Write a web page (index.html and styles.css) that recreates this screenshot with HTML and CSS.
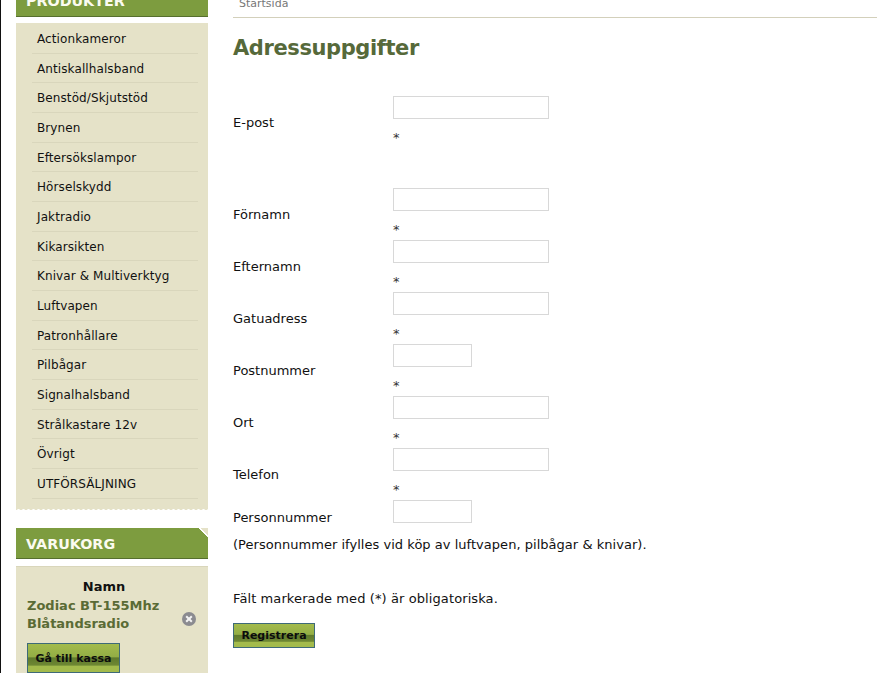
FILE: index.html
```html
<!DOCTYPE html>
<html lang="sv">
<head>
  <meta charset="UTF-8">
  <title>Adressuppgifter</title>
  <link rel="stylesheet" href="styles.css">
</head>
<body>
  <div class="page">
    <div class="sidebar">
      <div class="box-title title-products">PRODUKTER</div>
      <ul class="menu">
        <li>Actionkameror</li>
        <li>Antiskallhalsband</li>
        <li>Benstöd/Skjutstöd</li>
        <li>Brynen</li>
        <li>Eftersökslampor</li>
        <li>Hörselskydd</li>
        <li>Jaktradio</li>
        <li>Kikarsikten</li>
        <li>Knivar &amp; Multiverktyg</li>
        <li>Luftvapen</li>
        <li>Patronhållare</li>
        <li>Pilbågar</li>
        <li>Signalhalsband</li>
        <li>Strålkastare 12v</li>
        <li>Övrigt</li>
        <li>UTFÖRSÄLJNING</li>
      </ul>
      <div class="box-title title-cart">VARUKORG</div>
      <div class="cart">
        <div class="cart-head">Namn</div>
        <div class="cart-row">
          <span class="cart-item">Zodiac BT-155Mhz Blåtandsradio</span>
          <svg class="remove" width="14" height="14" viewBox="0 0 14 14">
            <circle cx="7" cy="7" r="7" fill="#8b8b90"/>
            <path d="M4.2 4.2l5.6 5.6M9.8 4.2l-5.6 5.6" stroke="#f4f4f4" stroke-width="2"/>
          </svg>
        </div>
        <button class="btn btn-cart">Gå till kassa</button>
      </div>
    </div>

    <div class="content">
      <div class="crumbs">Startsida</div>
      <h1>Adressuppgifter</h1>
      <div class="field field-first">
        <label>E-post</label>
        <div class="control"><input type="text"><span class="star">*</span></div>
      </div>
      <div class="field">
        <label>Förnamn</label>
        <div class="control"><input type="text"><span class="star">*</span></div>
      </div>
      <div class="field">
        <label>Efternamn</label>
        <div class="control"><input type="text"><span class="star">*</span></div>
      </div>
      <div class="field">
        <label>Gatuadress</label>
        <div class="control"><input type="text"><span class="star">*</span></div>
      </div>
      <div class="field">
        <label>Postnummer</label>
        <div class="control"><input type="text" class="short"><span class="star">*</span></div>
      </div>
      <div class="field">
        <label>Ort</label>
        <div class="control"><input type="text"><span class="star">*</span></div>
      </div>
      <div class="field">
        <label>Telefon</label>
        <div class="control"><input type="text"><span class="star">*</span></div>
      </div>
      <div class="field field-last">
        <label>Personnummer</label>
        <div class="control"><input type="text" class="short"></div>
      </div>
      <p class="note">(Personnummer ifylles vid köp av luftvapen, pilbågar &amp; knivar).</p>
      <p class="note note-required">Fält markerade med (*) är obligatoriska.</p>
      <button class="btn btn-register">Registrera</button>
    </div>
  </div>
</body>
</html>
```

FILE: styles.css
```css
html, body {
  margin: 0;
  height: 673px;
  overflow: hidden;
  background-color: white;
}
body {
  font-family: "DejaVu Sans", Verdana, sans-serif;
  font-size: 13px;
  color: #111;
  border-left: 1px solid #111;
}
.page {
  display: flex;
  margin-top: -14px;
  padding-left: 15px;
}
.sidebar {
  width: 192px;
  flex-shrink: 0;
}
.box-title {
  height: 30px;
  line-height: 30px;
  padding-left: 10px;
  background-color: #7d9c3f;
  border-bottom: 1px solid #566f2e;
  color: #fbfbf0;
  font-size: 14.3px;
  font-weight: bold;
}
.title-cart {
  line-height: 32px;
  margin-top: 16px;
  background: linear-gradient(225deg, #e5e2c8 0 5px, white 5px 7px, #7d9c3f 7px);
}
.menu {
  position: relative;
  list-style: none;
  margin: 6px 0 0;
  padding: 1px 10px 0 16px;
  height: 489px;
  box-sizing: border-box;
  background-color: #e5e2c8;
  font-size: 12px;
}
.menu::after {
  content: "";
  position: absolute;
  left: 0;
  right: 0;
  bottom: 0;
  height: 5px;
  background: radial-gradient(circle at 2.5px 5px, white 2.5px, transparent 3px) repeat-x;
  background-size: 5px 5px;
}
.menu li {
  height: 29.67px;
  line-height: 31px;
  padding-left: 5px;
  box-sizing: border-box;
  border-bottom: 1px solid #d9d6bc;
  letter-spacing: 0.1px;
}
.cart {
  margin-top: 7px;
  padding: 12px 10px 0 11px;
  height: 120px;
  background-color: #e5e2c8;
  border-top: 1px solid #d9d6bb;
}
.cart-head {
  text-align: center;
  font-weight: bold;
  margin-bottom: 3px;
  padding-right: 17px;
}
.cart-row {
  display: flex;
  align-items: center;
  justify-content: space-between;
}
.cart-item {
  width: 150px;
  color: #5a6b35;
  font-weight: bold;
  line-height: 18px;
}
.remove {
  margin-right: 2px;
  margin-top: 8px;
}
.btn {
  display: block;
  padding: 0;
  border: 1px solid #3e6a78;
  background: linear-gradient(#a3bb4c 0, #93ae45 45%, #5f7a2c 50%, #6d8733 75%, #a3bb4c 80%, #a3bb4c 100%);
  font-family: "DejaVu Sans", Verdana, sans-serif;
  font-size: 11px;
  font-weight: bold;
  color: #0c0c0c;
}
.btn-cart {
  width: 93px;
  height: 30px;
  margin-top: 10px;
}
.btn-register {
  width: 82px;
  height: 25px;
  margin-top: 17px;
}
.content {
  flex: 1;
  margin-left: 25px;
  margin-right: 9px;
}
.crumbs {
  height: 31px;
  line-height: 36px;
  padding-left: 6px;
  font-size: 11px;
  color: #777;
  border-bottom: 1px solid #d3d0bb;
}
h1 {
  margin: 15px 0 0;
  height: 63px;
  font-size: 21px;
  line-height: 30px;
  letter-spacing: -0.4px;
  color: #56693a;
}
.field {
  display: flex;
  height: 52px;
}
.field label {
  width: 160px;
  padding-top: 19px;
  line-height: 16px;
}
.field-first {
  height: 92px;
}
.field-last {
  height: 37px;
}
.field-last label {
  padding-top: 10px;
}
.control {
  display: flex;
  flex-direction: column;
}
input {
  display: block;
  width: 156px;
  height: 23px;
  box-sizing: border-box;
  border: 1px solid #d8d8d8;
  background-color: white;
  padding: 0;
  margin: 0;
}
input.short {
  width: 79px;
}
.star {
  font-size: 13px;
  line-height: 15px;
  margin-top: 11px;
  color: #333;
}
.note {
  margin: 0;
  line-height: 15px;
  letter-spacing: 0.03px;
}
.note-required {
  margin-top: 39px;
  letter-spacing: 0.1px;
}
```
